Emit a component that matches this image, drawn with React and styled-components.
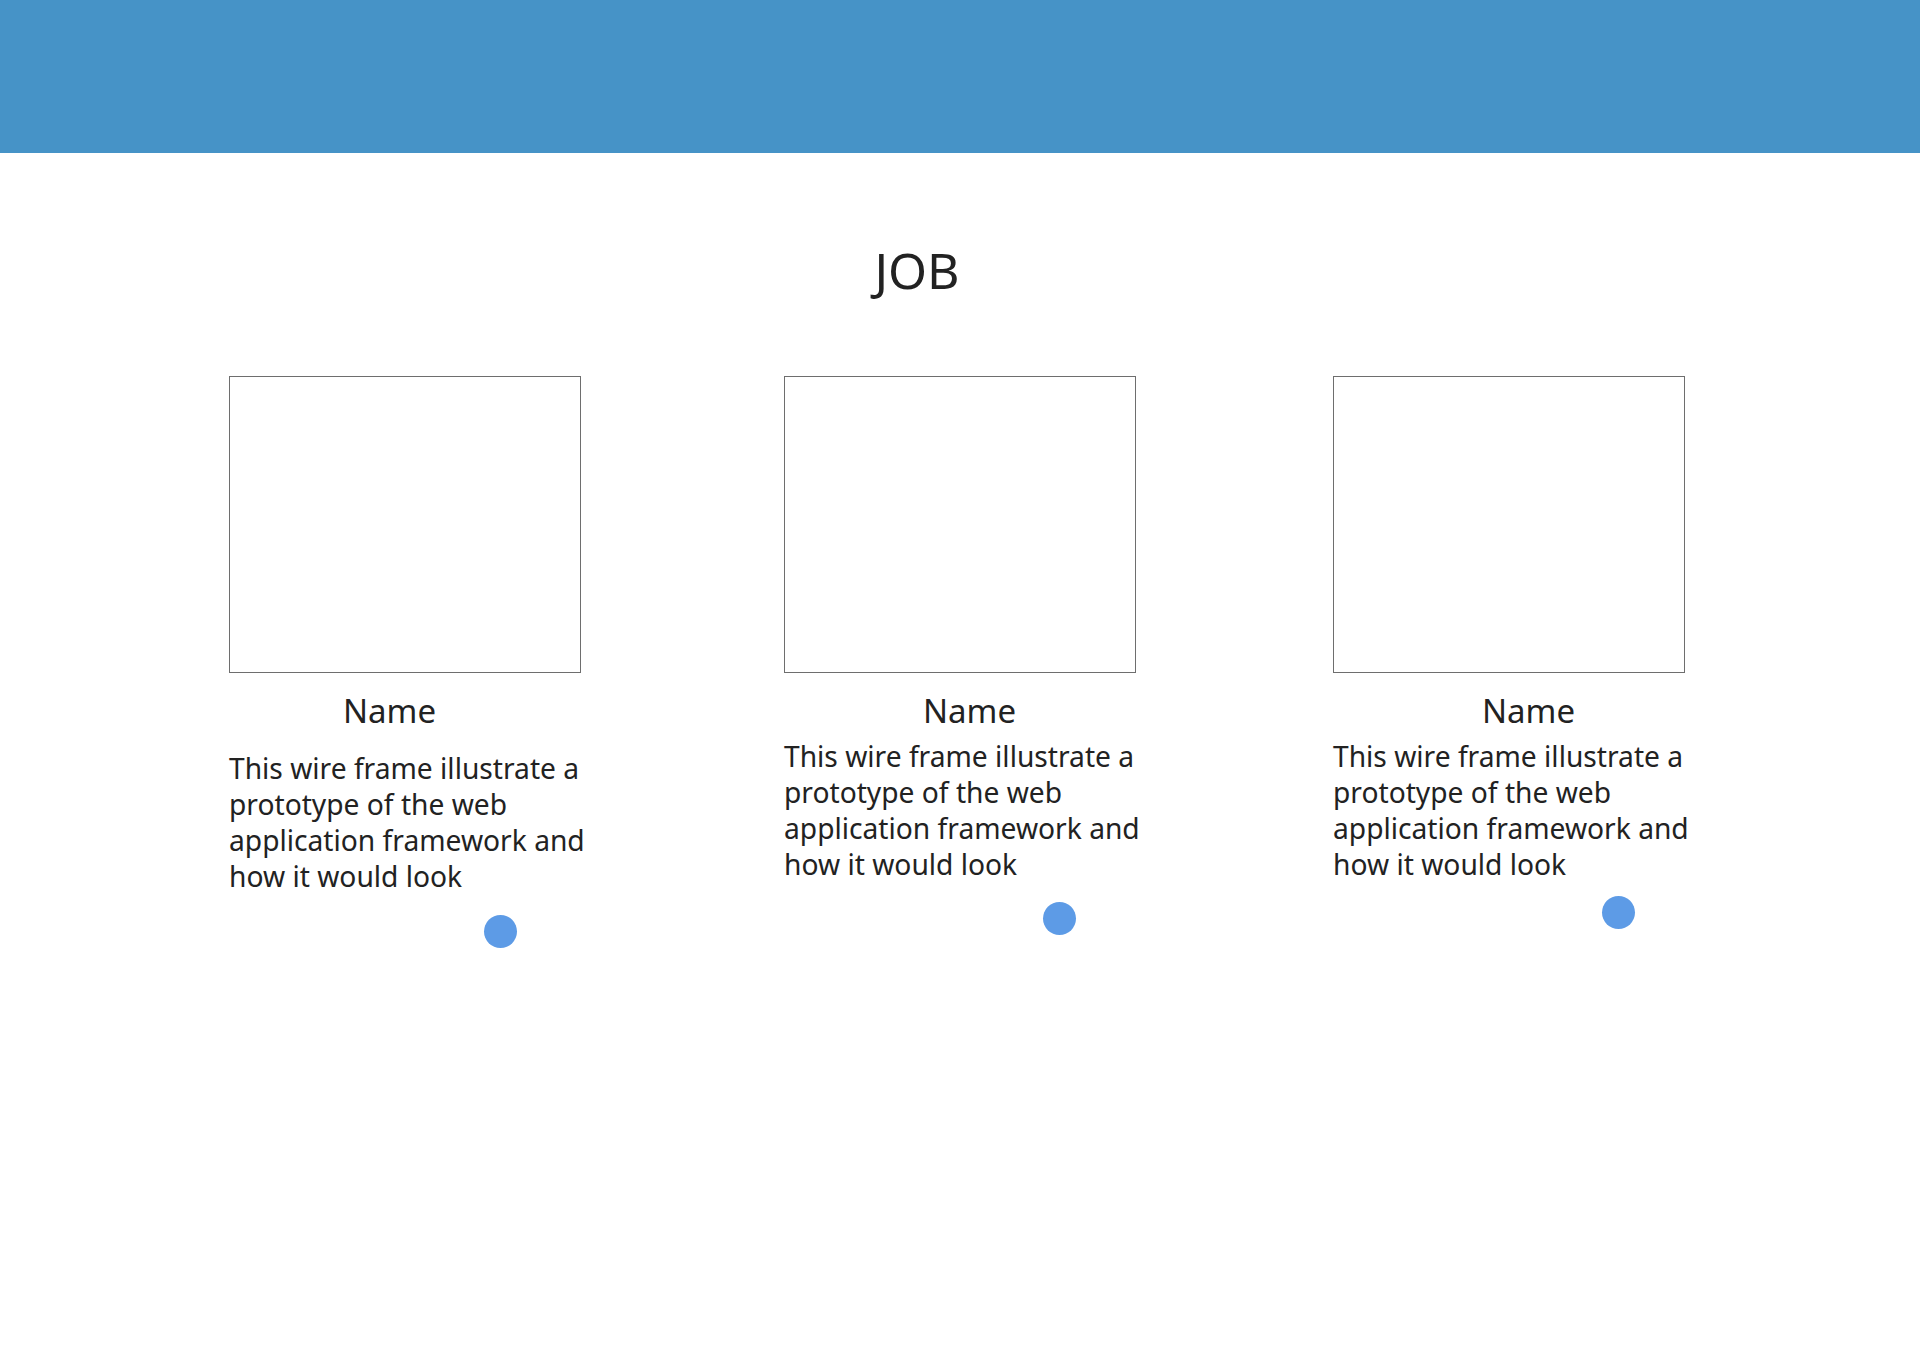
import React from "react"
import styled, {createGlobalStyle} from "styled-components"

const GlobalStyle = createGlobalStyle`
html, body {
    margin : 0;
    padding : 0;
    background : #ffffff;
    font-family : "Noto Sans", "Open Sans", sans-serif;
    color : #222222;
}`

const jobs = [
    {nudge : 0, indent : 114, textGap : 19, dotGap : 21, dotLeft : 255},
    {nudge : 3, indent : 139, textGap : 7, dotGap : 20, dotLeft : 259},
    {nudge : 0, indent : 149, textGap : 7, dotGap : 14, dotLeft : 269}
]

class App extends React.Component{
    render(){
        return(
            <Page>
                <GlobalStyle/>
                <TopBar/>
                <Title>JOB</Title>
                <CardRow>
                    {jobs.map((job, i) => (
                        <Card key={i} $nudge={job.nudge}>
                            <Picture/>
                            <Name $indent={job.indent}>Name</Name>
                            <Blurb $gap={job.textGap}>
                                This wire frame illustrate a<br/>
                                prototype of the web<br/>
                                application framework and<br/>
                                how it would look
                            </Blurb>
                            <Dot $gap={job.dotGap} $left={job.dotLeft}/>
                        </Card>
                    ))}
                </CardRow>
            </Page>
        )
    }
}

const Page = styled.div`
min-height : 1346px;
display : flex;
flex-direction : column;`

const TopBar = styled.header`
height : 153px;
background : #4693c7;`

const Title = styled.h1`
margin : 87px 0 0;
padding-right : 86px;
text-align : center;
font-size : 50px;
line-height : 60px;
font-weight : 400;
color : #222222;`

const CardRow = styled.section`
display : grid;
grid-template-columns : repeat(3, 352px);
column-gap : 200px;
padding-left : 229px;
margin-top : 76px;`

const Card = styled.article`
display : flex;
flex-direction : column;
margin-left : ${props => props.$nudge}px;`

const Picture = styled.div`
box-sizing : border-box;
width : 352px;
height : 297px;
border : 1px solid #6e6e6e;
background : #ffffff;`

const Name = styled.h2`
margin : 18px 0 0;
padding-left : ${props => props.$indent}px;
font-size : 33px;
line-height : 40px;
font-weight : 400;
color : #222222;`

const Blurb = styled.p`
margin : ${props => props.$gap}px 0 0;
font-size : 28.2px;
line-height : 36px;
white-space : nowrap;
color : #222222;`

const Dot = styled.span`
display : block;
width : 33px;
height : 33px;
border-radius : 50%;
background : #5d9be6;
margin : ${props => props.$gap}px 0 0 ${props => props.$left}px;`

export default App
